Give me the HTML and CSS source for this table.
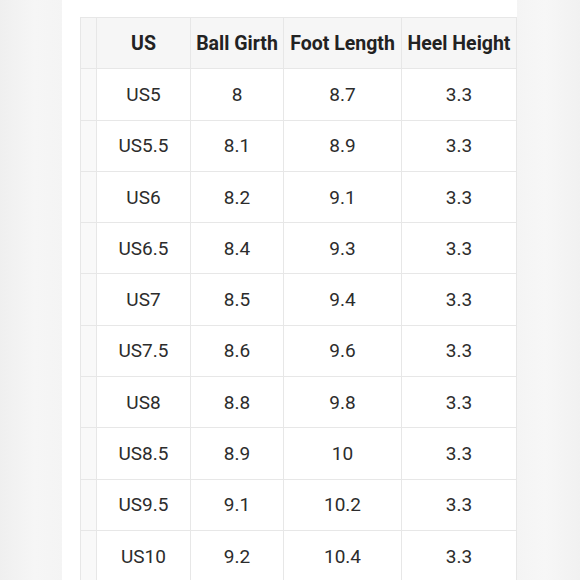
FILE: index.html
```html
<!DOCTYPE html>
<html lang="en">
<head>
<meta charset="utf-8">
<title>Size Chart</title>
<link rel="stylesheet" href="styles.css">
</head>
<body>
<div class="page">
  <div class="panel">
    <div class="grid">
      <div class="cell side head"></div><div class="cell head">US</div><div class="cell head">Ball Girth</div><div class="cell head">Foot Length</div><div class="cell head">Heel Height</div>
      <div class="cell side"></div><div class="cell">US5</div><div class="cell">8</div><div class="cell">8.7</div><div class="cell">3.3</div>
      <div class="cell side"></div><div class="cell">US5.5</div><div class="cell">8.1</div><div class="cell">8.9</div><div class="cell">3.3</div>
      <div class="cell side"></div><div class="cell">US6</div><div class="cell">8.2</div><div class="cell">9.1</div><div class="cell">3.3</div>
      <div class="cell side"></div><div class="cell">US6.5</div><div class="cell">8.4</div><div class="cell">9.3</div><div class="cell">3.3</div>
      <div class="cell side"></div><div class="cell">US7</div><div class="cell">8.5</div><div class="cell">9.4</div><div class="cell">3.3</div>
      <div class="cell side"></div><div class="cell">US7.5</div><div class="cell">8.6</div><div class="cell">9.6</div><div class="cell">3.3</div>
      <div class="cell side"></div><div class="cell">US8</div><div class="cell">8.8</div><div class="cell">9.8</div><div class="cell">3.3</div>
      <div class="cell side"></div><div class="cell">US8.5</div><div class="cell">8.9</div><div class="cell">10</div><div class="cell">3.3</div>
      <div class="cell side"></div><div class="cell">US9.5</div><div class="cell">9.1</div><div class="cell">10.2</div><div class="cell">3.3</div>
      <div class="cell side"></div><div class="cell">US10</div><div class="cell">9.2</div><div class="cell">10.4</div><div class="cell">3.3</div>
    </div>
  </div>
</div>
</body>
</html>
```
FILE: styles.css
```css
html, body {
  margin: 0;
  padding: 0;
  height: 100%;
  overflow: hidden;
}
body {
  background: linear-gradient(90deg, #efefef 0%, #f6f6f6 6%, #f4f4f4 11%, #f4f4f4 89%, #f7f7f7 94%, #f1f1f1 100%);
  font-family: Roboto, "Noto Sans", sans-serif;
}
.page {
  display: flex;
  height: 580px;
  padding-left: 62px;
}
.panel {
  background: #ffffff;
  padding: 17px 0 0 18px;
  height: 580px;
  box-sizing: border-box;
}
.grid {
  display: grid;
  grid-template-columns: 15px 93px 92px 117px 114px;
  grid-auto-rows: 50.3px;
  gap: 1px;
  padding: 1px;
  background: #e7e7e7;
}
.cell {
  background: #ffffff;
  display: flex;
  align-items: center;
  justify-content: center;
  font-size: 19px;
  color: #2c2c2c;
}
.cell.side {
  background: #f9f9f9;
}
.cell.head {
  background: #f6f6f6;
  font-size: 19.5px;
  font-weight: 700;
  color: #222222;
}
```
